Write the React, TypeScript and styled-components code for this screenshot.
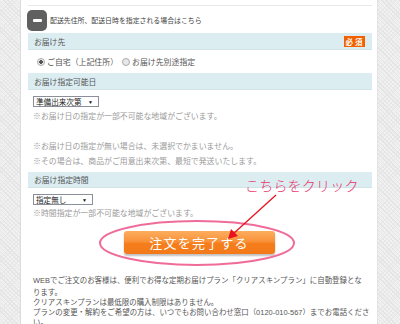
import React from "react";
import styled, { createGlobalStyle } from "styled-components";

const Global = createGlobalStyle`
  html, body { margin: 0; padding: 0; }
  body {
    width: 400px; height: 324px; overflow: hidden;
    font-family: "Liberation Sans", "Noto Sans CJK JP", sans-serif;
    background: #fff;
  }
`;

const hatch = `
  background-color: #f1f1f1;
  background-image: repeating-linear-gradient(45deg, #e4e4e4 0 1px, transparent 1px 3px),
    repeating-linear-gradient(-45deg, #e9e9e9 0 1px, transparent 1px 3px);
`;

const Page = styled.div`
  display: flex;
  width: 400px;
  height: 324px;
  overflow: hidden;
`;

const Gutter = styled.div<{ $w: number; $side: "l" | "r" }>`
  ${hatch}
  width: ${(p) => p.$w}px;
  flex: none;
  ${(p) => (p.$side === "l" ? "border-right: 1px solid #dcdcdc;" : "border-left: 1px solid #e2e2e2;")}
`;

const Main = styled.div`
  flex: 1;
  background: #fff;
  padding: 0 5px 0 6px;
  position: relative;
`;

const TopRule = styled.div`
  margin: 5px 0 0 1px;
  height: 0;
  border-top: 1px solid #e8e8e8;
`;

const ToggleRow = styled.div`
  height: 27px;
  display: flex;
  align-items: center;
  gap: 3px;
`;

const MinusIcon = styled.div`
  width: 20px;
  height: 21px;
  border-radius: 5px;
  background: #606060;
  display: flex;
  align-items: center;
  justify-content: center;
  margin-top: 1px;
  &::after {
    content: "";
    width: 9px;
    height: 3px;
    background: #fff;
    border-radius: 1px;
  }
`;

const ToggleText = styled.span`
  font-size: 6.9px;
  color: #444;
  white-space: nowrap;
`;

const Header = styled.div<{ $h: number; $mt?: number }>`
  height: ${(p) => p.$h}px;
  margin-top: ${(p) => p.$mt ?? 0}px;
  box-sizing: border-box;
  background: #dcedf2;
  border-bottom: 1px solid #d0e3e8;
  display: flex;
  align-items: center;
  justify-content: space-between;
  padding: 0 7px 0 6px;
  margin-left: 1px;
  font-size: 7.8px;
  color: #555;
`;

const Badge = styled.span`
  background: #f26100;
  color: #fff;
  font-size: 7.5px;
  font-weight: bold;
  height: 11px;
  width: 21px;
  display: flex;
  align-items: center;
  justify-content: center;
  letter-spacing: 2px;
  padding-left: 1px;
  box-sizing: border-box;
`;

const RadioRow = styled.div`
  height: 23px;
  display: flex;
  align-items: center;
  padding-left: 10px;
  font-size: 7.9px;
  color: #555;
`;

const RadioItem = styled.label`
  display: flex;
  align-items: center;
  gap: 1px;
  margin-right: 4px;
`;

const RadioDot = styled.span<{ $on?: boolean }>`
  width: 6px;
  height: 6px;
  border-radius: 50%;
  border: 1px solid #aaa;
  background: ${(p) => (p.$on ? "radial-gradient(circle, #555 0 1.6px, #eee 2px)" : "#e8e8e8")};
  margin-right: 1px;
`;

const SelectBox = styled.div<{ $w: number; $mt: number }>`
  margin: ${(p) => p.$mt}px 0 0 6px;
  width: ${(p) => p.$w}px;
  height: 11px;
  box-sizing: border-box;
  border: 1px solid #8a8f99;
  background: #fff;
  display: flex;
  align-items: center;
  justify-content: space-between;
  padding: 0 5px 0 2px;
  font-size: 7.6px;
  color: #222;
  &::after {
    content: "▼";
    font-size: 5px;
    color: #111;
  }
`;

const Notes = styled.div<{ $mt: number }>`
  margin: ${(p) => p.$mt}px 0 0 6px;
  font-size: 7.9px;
  line-height: 15px;
  color: #9a9a9a;
  white-space: nowrap;
`;

const Blank = styled.div`
  height: 15px;
`;

const ButtonArea = styled.div`
  display: flex;
  justify-content: center;
  padding: 10px 0 0 0;
  height: 44px;
  margin-left: -6px;
  margin-right: -5px;
`;

const OrderButton = styled.button`
  width: 151px;
  height: 23px;
  border: none;
  border-radius: 3px;
  background: linear-gradient(#fcae5e 0%, #f9923a 45%, #f57d1b 55%, #f37a1a 100%);
  box-shadow: 0 2px 2px rgba(0, 0, 0, 0.25);
  color: #fff;
  font-family: "Noto Sans CJK JP", sans-serif;
  font-size: 13px;
  letter-spacing: 1.2px;
  padding: 0;
  display: flex;
  align-items: center;
  justify-content: center;
`;

const Overlay = styled.svg`
  position: absolute;
  left: 0;
  top: 0;
  overflow: visible;
  pointer-events: none;
`;

const Handwritten = styled.div`
  position: absolute;
  left: 224px;
  top: 175px;
  font-family: "Noto Sans CJK JP", sans-serif;
  font-weight: 300;
  font-size: 14px;
  color: #e8356b;
  letter-spacing: 0.2px;
  white-space: nowrap;
`;

const Info = styled.div`
  margin: 0 0 0 6px;
  font-size: 7.45px;
  color: #555;
  white-space: nowrap;
`;

const InfoLine = styled.div<{ $h: number }>`
  height: ${(p) => p.$h}px;
  line-height: ${(p) => p.$h}px;
`;

export default function App() {
  return (
    <>
      <Global />
      <Page>
        <Gutter $w={20} $side="l" />
        <Main>
          <TopRule />
          <ToggleRow>
            <MinusIcon />
            <ToggleText>配送先住所、配送日時を指定される場合はこちら</ToggleText>
          </ToggleRow>
          <Header $h={17}>
            <span>お届け先</span>
            <Badge>必須</Badge>
          </Header>
          <RadioRow>
            <RadioItem>
              <RadioDot $on />
              ご自宅（上記住所）
            </RadioItem>
            <RadioItem>
              <RadioDot />
              お届け先別途指定
            </RadioItem>
          </RadioRow>
          <Header $h={17}>
            <span>お届け指定可能日</span>
          </Header>
          <SelectBox $w={66} $mt={6}>準備出来次第</SelectBox>
          <Notes $mt={2}>
            <div>※お届け日の指定が一部不可能な地域がございます。</div>
            <Blank />
            <div>※お届け日の指定が無い場合は、未選択でかまいません。</div>
            <div>※その場合は、商品がご用意出来次第、最短で発送いたします。</div>
          </Notes>
          <Header $h={16} $mt={3}>
            <span>お届け指定時間</span>
          </Header>
          <SelectBox $w={60} $mt={6}>指定無し</SelectBox>
          <Notes $mt={1}>
            <div>※時間指定が一部不可能な地域がございます。</div>
          </Notes>
          <ButtonArea>
            <OrderButton>注文を完了する</OrderButton>
          </ButtonArea>
          <Info>
            <InfoLine $h={12}>WEBでご注文のお客様は、便利でお得な定期お届けプラン「クリアスキンプラン」に自動登録とな</InfoLine>
            <InfoLine $h={11}>ります。</InfoLine>
            <InfoLine $h={10}>クリアスキンプランは最低限の購入制限はありません。</InfoLine>
            <InfoLine $h={10}>プランの変更・解約をご希望の方は、いつでもお問い合わせ窓口（0120-010-567）までお電話くださ</InfoLine>
            <InfoLine $h={10}>い。</InfoLine>
          </Info>
          <Handwritten>こちらをクリック</Handwritten>
          <Overlay width="356" height="324" viewBox="21 0 356 324">
            <ellipse cx="197" cy="243" rx="97" ry="22" fill="none" stroke="#ef6b9a" strokeWidth="2" />
            <line x1="276" y1="195" x2="233" y2="234" stroke="#e8121e" strokeWidth="1.3" />
            <polygon points="228,239 231,229 238,236" fill="#e8121e" />
          </Overlay>
        </Main>
        <Gutter $w={22} $side="r" />
      </Page>
    </>
  );
}
